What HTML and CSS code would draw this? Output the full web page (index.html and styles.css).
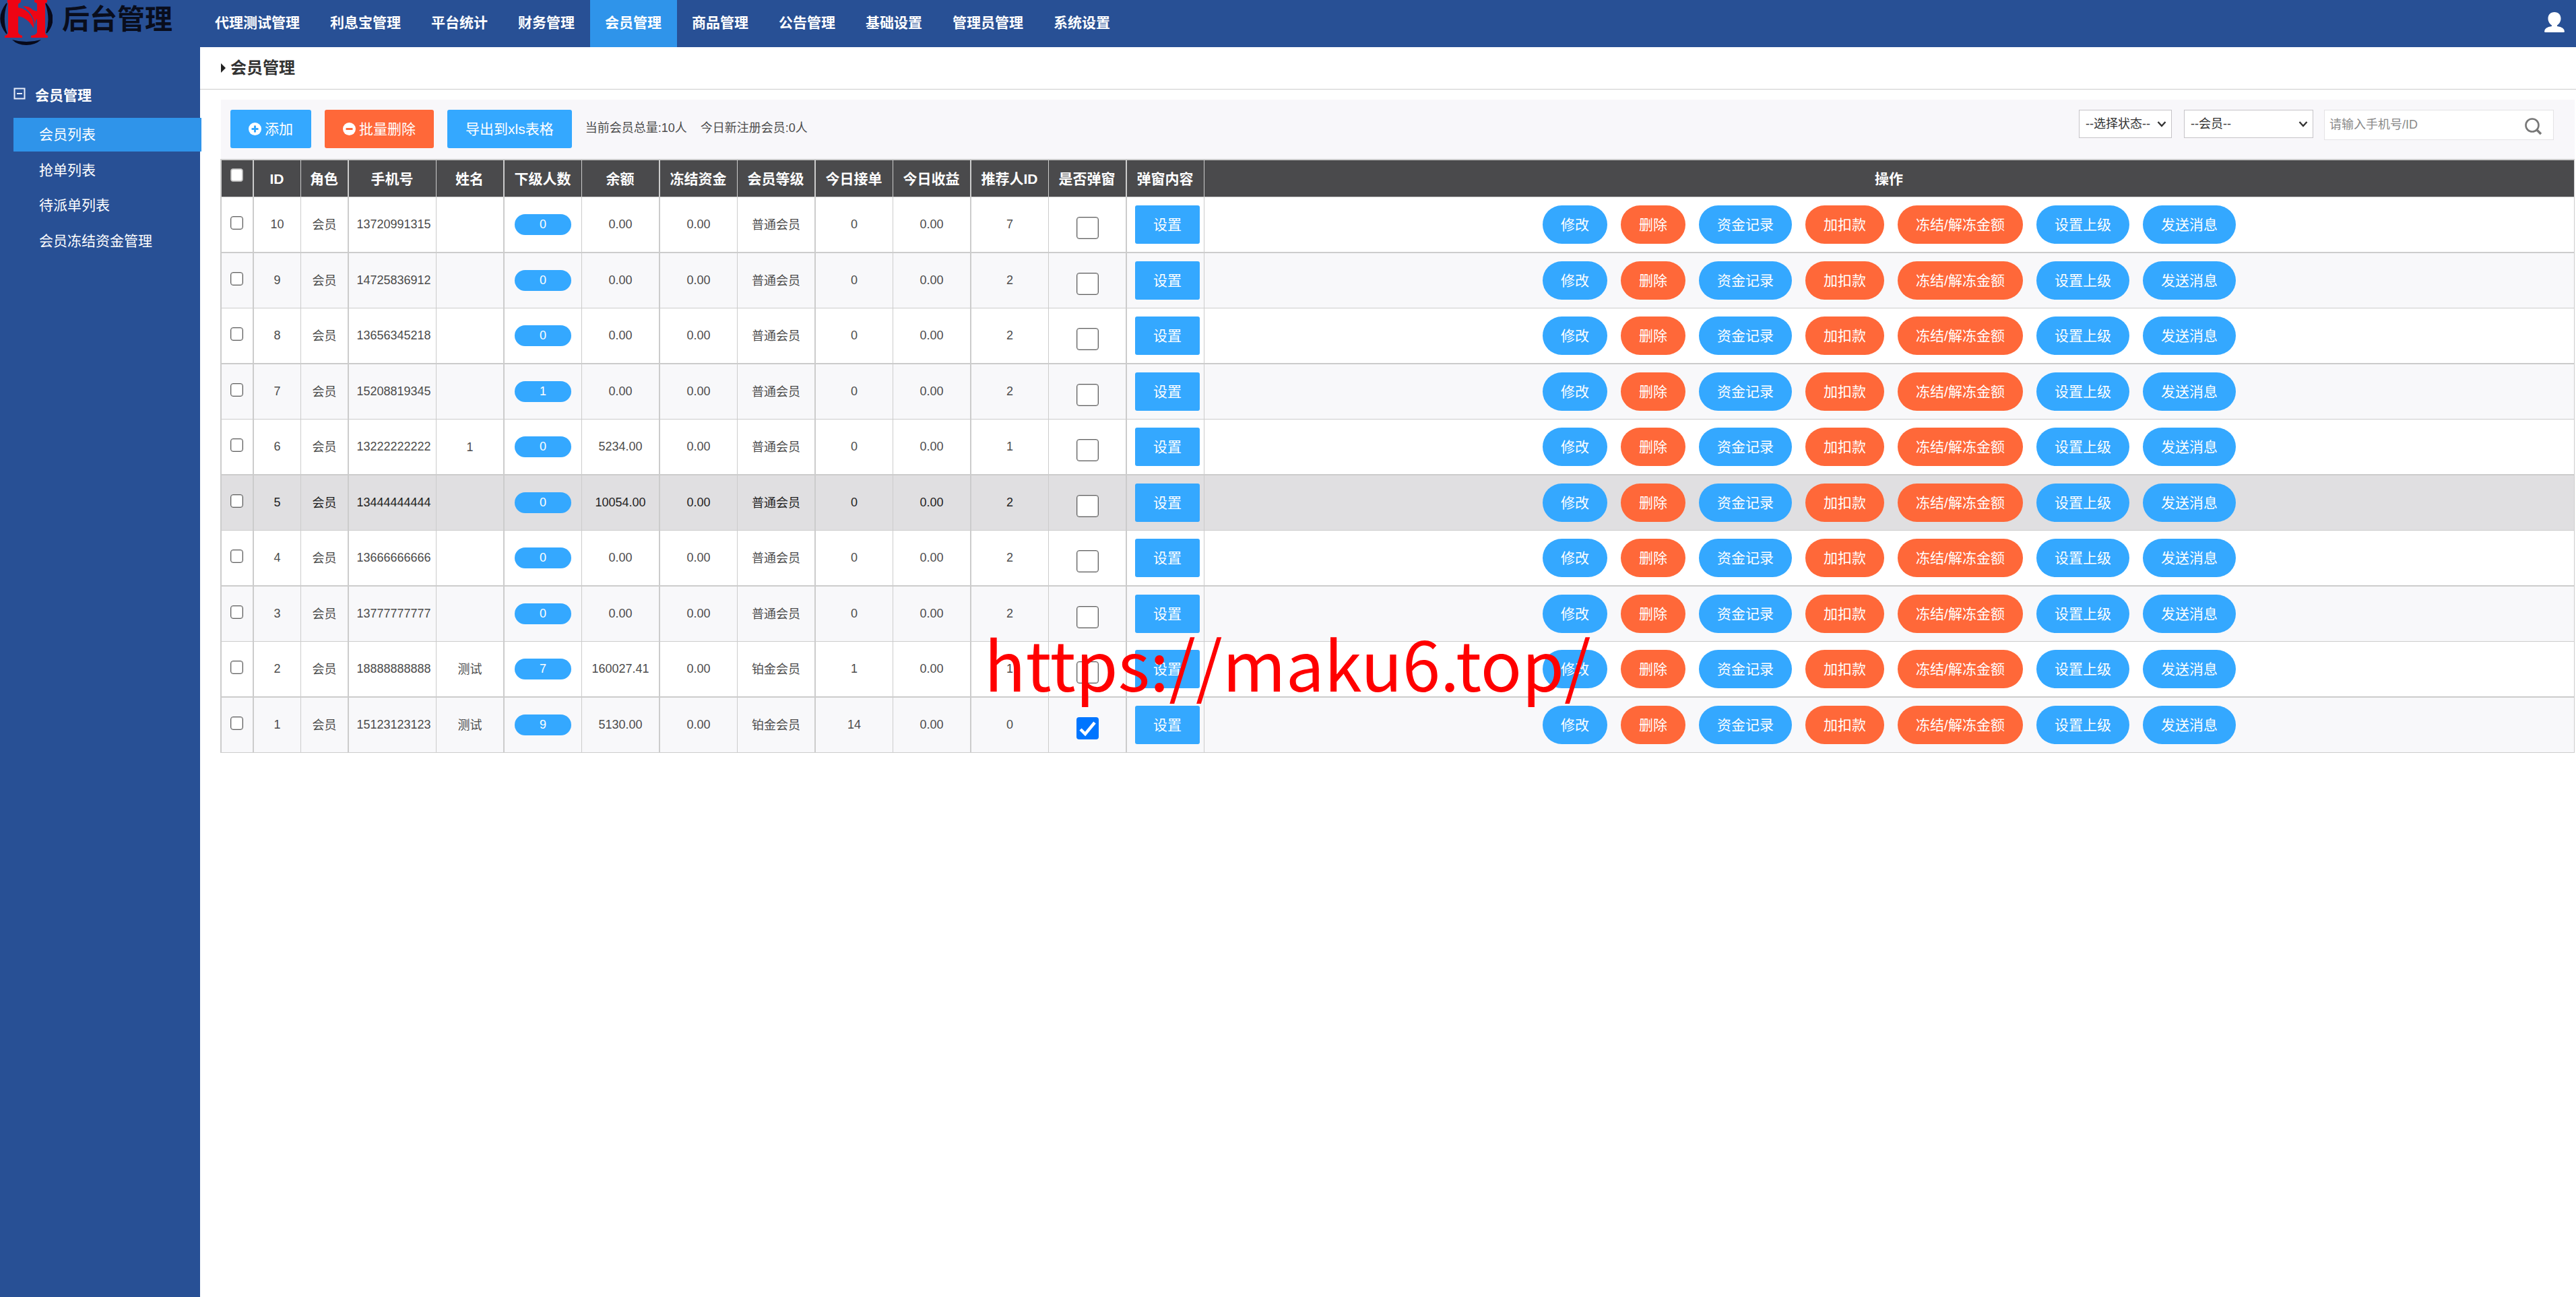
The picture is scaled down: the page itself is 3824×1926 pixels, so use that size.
FILE: index.html
```html
<!DOCTYPE html>
<html lang="zh-CN">
<head>
<meta charset="utf-8">
<title>后台管理</title>
<link rel="stylesheet" href="styles.css">
</head>
<body>
<header class="topbar">
  <div class="brand">
    <svg class="brand-mark" viewBox="0 0 78 70" width="78" height="70">
      <path d="M10 5Q-8 28 10 50Q2 28 10 5ZM68 5Q87 28 69 49Q76 28 68 5Z" fill="#07091a" stroke="#07091a" stroke-width="1.500"/>
      <path d="M18 59Q39 65 61 59Q52 67 39 67Q26 67 18 59Z" fill="#07091a"/>
      <path d="M11 0H31V3L27 6V48Q28 52 33 53V56H7V53Q12 52 12 48V5L11 3Z" fill="#ee0414"/>
      <path d="M51 0H70V3L67 5V48Q67 52 71 53V56H46V53Q54 52 55 48V5L51 3Z" fill="#ee0414"/>
      <path d="M26 11Q40 13 46 24Q51 32 50 42Q40 25 26 24Z" fill="#ee0414"/>
      <path d="M34 9Q44 9 49 15L56 17V27Q52 29 52 38Q50 20 34 9Z" fill="#ee0414"/>
    </svg>
    <span class="brand-name">后台管理</span>
  </div>
  <nav class="topnav">
    <a>代理测试管理</a><a>利息宝管理</a><a>平台统计</a><a>财务管理</a><a class="active">会员管理</a><a>商品管理</a><a>公告管理</a><a>基础设置</a><a>管理员管理</a><a>系统设置</a>
  </nav>
  <svg class="user" viewBox="0 0 30 30" width="30" height="30"><path d="M15 0C21 0 24.500 4 24.500 9.500C24.500 14 22 17.500 19 19.500V21Q30 22.500 30 29Q30 30 28 30H2Q0 30 0 29Q0 22.500 11 21V19.500C8 17.500 5.500 14 5.500 9.500C5.500 4 9 0 15 0Z" fill="#fff"/></svg>
</header>
<div class="body">
  <aside class="sidebar">
    <div class="menu-title">
      <svg width="18" height="18" viewBox="0 0 18 18"><path d="M1.500 1.500H16.500V16.500H1.500ZM5 9H13" fill="none" stroke="#e8eefa" stroke-width="2"/></svg>
      <span>会员管理</span>
    </div>
    <a class="menu-item active">会员列表</a>
    <a class="menu-item">抢单列表</a>
    <a class="menu-item">待派单列表</a>
    <a class="menu-item">会员冻结资金管理</a>
  </aside>
  <main class="main">
    <h1 class="page-title"><i class="caret"></i>会员管理</h1>
    <div class="toolbar">
      <button class="btn add"><svg width="19" height="19" viewBox="0 0 19 19"><circle cx="9.500" cy="9.500" r="9.500" fill="#fff"/><path d="M9.500 4.500V14.500M4.500 9.500H14.500" stroke="#34a8ff" stroke-width="3"/></svg>添加</button>
      <button class="btn red"><svg width="19" height="19" viewBox="0 0 19 19"><circle cx="9.500" cy="9.500" r="9.500" fill="#fff"/><path d="M4.500 9.500H14.500" stroke="#ff6839" stroke-width="3"/></svg>批量删除</button>
      <button class="btn">导出到xls表格</button>
      <span class="stat">当前会员总量:10人</span>
      <span class="stat next">今日新注册会员:0人</span>
      <div class="filters">
        <div class="select state">--选择状态--<svg width="14" height="9" viewBox="0 0 14 9"><path d="M1.500 1L7 7L12.500 1" fill="none" stroke="#333" stroke-width="2.400"/></svg></div>
        <div class="select role">--会员--<svg width="14" height="9" viewBox="0 0 14 9"><path d="M1.500 1L7 7L12.500 1" fill="none" stroke="#333" stroke-width="2.400"/></svg></div>
        <div class="search">请输入手机号/ID<svg width="26" height="26" viewBox="0 0 26 26"><circle cx="11" cy="11" r="9.500" fill="none" stroke="#777" stroke-width="2.600"/><path d="M18 18L24 24" stroke="#777" stroke-width="3.400"/></svg></div>
      </div>
    </div>
    <table class="members">
      <colgroup><col class="w50"><col class="w70"><col class="w71"><col class="w130"><col class="w101"><col class="w115"><col class="w116"><col class="w115"><col class="w116"><col class="w115"><col class="w116"><col class="w115"><col class="w116"><col class="w115"><col></colgroup>
      <thead><tr><th><i class="check"></i></th><th>ID</th><th>角色</th><th>手机号</th><th>姓名</th><th>下级人数</th><th>余额</th><th>冻结资金</th><th>会员等级</th><th>今日接单</th><th>今日收益</th><th>推荐人ID</th><th>是否弹窗</th><th>弹窗内容</th><th>操作</th></tr></thead>
      <tbody id="rows"></tbody>
    </table>
  </main>
</div>
<div class="watermark">https://maku6.top/</div>
<script src="rows.js"></script>
</body>
</html>
```
FILE: styles.css
```css
* { box-sizing: border-box; }
body { margin: 0; height: 1926px; overflow: hidden; background: #fff; color: #4c4c4c; font: 18px/27px "Liberation Sans", "Noto Sans CJK SC", sans-serif; display: flex; flex-direction: column; }
.topbar { height: 70px; flex: none; background: #285095; display: flex; }
.brand { width: 296.5px; display: flex; align-items: flex-start; }
.brand-mark { flex: none; }
.brand-name { margin-left: 14px; font-size: 41px; line-height: 58px; font-weight: 700; color: #090d1c; white-space: nowrap; }
.topnav { display: flex; }
.topnav a { padding: 0 22.5px; font-size: 21px; line-height: 68px; font-weight: 700; color: #fff; white-space: nowrap; }
.topnav a.active { background: #2f94ea; }
.user { margin: 18px 17px 0 auto; }
.body { flex: 1; display: flex; }
.sidebar { width: 297px; flex: none; background: #285095; padding: 48px 0 0 20px; color: #fff; font-size: 21px; }
.menu-title { height: 57px; display: flex; gap: 14px; font-weight: 700; line-height: 48px; }
.menu-title svg { margin-top: 12px; }
.menu-item { display: block; padding-left: 38px; height: 50px; line-height: 50px; margin-bottom: 2.5px; }
.menu-item.active { width: 279px; background: #2f94ea; position: relative; }
.main { flex: 1; min-width: 0; }
.page-title { margin: 0; height: 63px; padding-left: 31px; border-bottom: 1px solid #ccc; display: flex; align-items: center; gap: 7px; font-size: 24px; line-height: 64px; color: #333; }
.caret { border: 7px solid transparent; border-left-color: #222; border-right: 0; }
.toolbar { margin: 15px 2px 0 31px; height: 88px; padding: 15px 31px 0 14px; background: #f8f7fa; display: flex; align-items: flex-start; }
.btn { height: 57px; border: 0; border-radius: 3px; padding: 0 27px; margin: 0 20px 0 0; background: #34a8ff; color: #fff; font: 21px/57px "Liberation Sans", "Noto Sans CJK SC", sans-serif; display: flex; align-items: center; gap: 5px; white-space: nowrap; }
.btn.red { background: #ff6839; }
.stat { line-height: 54px; }
.stat.next { margin-left: 20px; }
.filters { margin-left: auto; display: flex; align-items: flex-start; }
.select { height: 42px; border: 1.5px solid #c6c4c8; background: #fff; padding: 0 7px 0 9px; color: #333; line-height: 38px; display: flex; justify-content: space-between; align-items: center; margin-right: 18px; }
.state { width: 138px; }
.role { width: 192px; margin-right: 16px; }
.search { width: 341px; height: 45px; border: 1px solid #e4e3e6; background: #fff; color: #8a8a8a; padding: 0 16px 0 7px; line-height: 42px; display: flex; justify-content: space-between; }
.search svg { margin-top: 11px; }
.members { width: 3495px; margin-left: 30px; table-layout: fixed; border-collapse: separate; border-spacing: 0; border-top: 2px solid #ccc; }
.w50 { width: 50px; } .w70 { width: 70px; } .w71 { width: 71px; } .w101 { width: 101px; } .w115 { width: 115px; } .w116 { width: 116px; } .w130 { width: 130px; }
th, td { padding: 0; text-align: center; vertical-align: middle; border: 0 solid #ccc; border-right-width: 1px; border-bottom-width: 1px; white-space: nowrap; }
th:nth-child(4n+1), td:nth-child(4n+1), th:nth-child(3), td:nth-child(3), th:nth-child(7), td:nth-child(7), th:nth-child(11), td:nth-child(11) { border-right-width: 2px; }
th:last-child, td:last-child { border-right-width: 1px; }
th:first-child, td:first-child { border-left-width: 2px; }
th { height: 55px; background: #4a4a4c; color: #fff; font-size: 21px; padding-right: 1px; }
td { height: 82px; }
td:nth-child(4) { padding-left: 4px; }
tr:nth-child(odd) td { height: 83px; border-bottom-width: 2px; }
tr:nth-child(even) td { background: #f8f8fa; }
tbody tr.hover td { background: #e0dfe1; color: #222; }
.cjk { position: relative; top: 1px; }
.check { display: block; width: 19px; height: 20px; margin: 0 auto; border: 1px solid #5f5f5f; box-shadow: inset 0 0 0 1px #ccc; border-radius: 4px; background: #fff; position: relative; top: -3px; left: -1px; }
th .check { border-color: #aaa; top: -5px; left: 0; }
.check.big { width: 33px; height: 33px; top: 5px; left: 0; }
.check.on { border: 0; box-shadow: none; background: #0075ff; }
.check.on svg { display: block; }
.count { display: block; width: 84px; height: 31px; margin: 0 auto; border-radius: 16px; background: #34a8ff; color: #fff; line-height: 30px; }
td .btn { margin: 0; }
td .set { margin-left: 12px; }
.actions { display: flex; justify-content: center; gap: 20px; }
.actions .btn { border-radius: 29px; }
.watermark { position: absolute; left: 1461px; top: 932px; font: 101.4px/102px "Noto Sans CJK SC", sans-serif; color: #f00; white-space: nowrap; }
```
FILE: rows.js
```js
const members = [
  [10, "13720991315", "", 0, "0.00", "普通会员", 0, 7],
  [9, "14725836912", "", 0, "0.00", "普通会员", 0, 2],
  [8, "13656345218", "", 0, "0.00", "普通会员", 0, 2],
  [7, "15208819345", "", 1, "0.00", "普通会员", 0, 2],
  [6, "13222222222", "1", 0, "5234.00", "普通会员", 0, 1],
  [5, "13444444444", "", 0, "10054.00", "普通会员", 0, 2],
  [4, "13666666666", "", 0, "0.00", "普通会员", 0, 2],
  [3, "13777777777", "", 0, "0.00", "普通会员", 0, 2],
  [2, "18888888888", "测试", 7, "160027.41", "铂金会员", 1, 1],
  [1, "15123123123", "测试", 9, "5130.00", "铂金会员", 14, 0]
];
const tick = '<svg width="33" height="33" viewBox="0 0 33 33"><path d="M6 18L13 25L27 8" fill="none" stroke="#fff" stroke-width="4.500"/></svg>';
const actions = [["修改", ""], ["删除", "red"], ["资金记录", ""], ["加扣款", "red"], ["冻结/解冻金额", "red"], ["设置上级", ""], ["发送消息", ""]]
  .map(([label, tone]) => `<button class="btn ${tone}">${label}</button>`).join("");
document.getElementById("rows").innerHTML = members.map(([id, phone, name, subs, balance, level, orders, ref]) => `
<tr class="${id === 5 ? "hover" : ""}"><td><i class="check"></i></td><td>${id}</td><td><span class="cjk">会员</span></td><td>${phone}</td><td><span class="cjk">${name}</span></td>
<td><span class="count">${subs}</span></td><td>${balance}</td><td>0.00</td><td><span class="cjk">${level}</span></td><td>${orders}</td><td>0.00</td><td>${ref}</td>
<td><i class="check big ${id === 1 ? "on" : ""}">${id === 1 ? tick : ""}</i></td><td><button class="btn set">设置</button></td><td><div class="actions">${actions}</div></td></tr>`).join("");
```
